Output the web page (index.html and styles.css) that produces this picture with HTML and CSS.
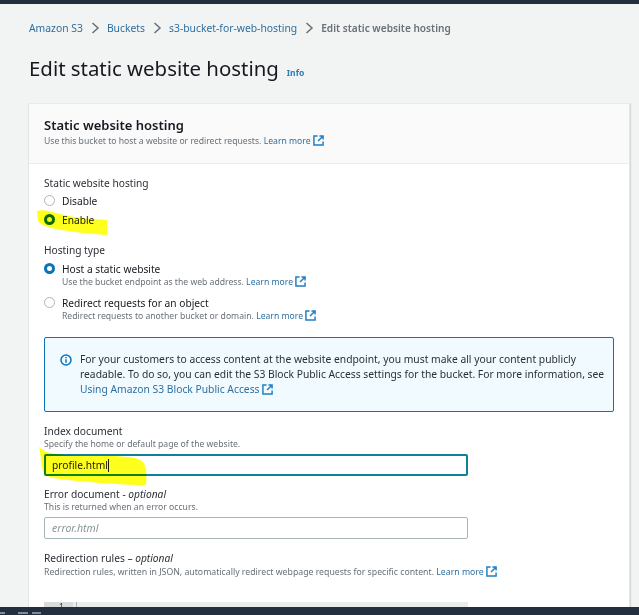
FILE: index.html
```html
<!DOCTYPE html>
<html lang="en">
<head>
<meta charset="utf-8">
<title>Edit static website hosting</title>
<link rel="stylesheet" href="styles.css">
</head>
<body>
<svg width="0" height="0" class="defs">
  <symbol id="ext" viewBox="0 0 12 12">
    <path d="M5 1H1v10h10V7M7 1h4v4M11 1 5.500 6.500" fill="none" stroke="currentColor" stroke-width="1.600"/>
  </symbol>
  <symbol id="chev" viewBox="0 0 9 12">
    <path d="M1.500 1 7 6l-5.500 5" fill="none" stroke="currentColor" stroke-width="1.500"/>
  </symbol>
</svg>
<div class="topbar"></div>
<main class="page">
  <nav class="crumbs">
    <a>Amazon S3</a><svg class="chev"><use href="#chev"/></svg>
    <a>Buckets</a><svg class="chev"><use href="#chev"/></svg>
    <a>s3-bucket-for-web-hosting</a><svg class="chev"><use href="#chev"/></svg>
    <span class="current">Edit static website hosting</span>
  </nav>
  <header class="title-row">
    <h1>Edit static website hosting</h1>
    <a class="info">Info</a>
  </header>
  <section class="card">
    <div class="card-head">
      <h2>Static website hosting</h2>
      <p class="desc">Use this bucket to host a website or redirect requests. <a>Learn more</a> <svg class="ext"><use href="#ext"/></svg></p>
    </div>
    <div class="card-body">
      <div class="group g-static">
        <div class="label">Static website hosting</div>
        <div class="radio"><span class="dot"></span><span>Disable</span></div>
        <div class="radio"><span class="dot on-green"></span><span>Enable</span></div>
      </div>
      <div class="group g-type">
        <div class="label">Hosting type</div>
        <div class="radio rich"><span class="dot on"></span><div><div>Host a static website</div><p class="desc">Use the bucket endpoint as the web address. <a>Learn more</a> <svg class="ext"><use href="#ext"/></svg></p></div></div>
        <div class="radio rich"><span class="dot"></span><div><div>Redirect requests for an object</div><p class="desc">Redirect requests to another bucket or domain. <a>Learn more</a> <svg class="ext"><use href="#ext"/></svg></p></div></div>
      </div>
      <div class="alert">
        <svg class="alert-icon" viewBox="0 0 12 12"><circle cx="6" cy="6" r="5" fill="none" stroke="currentColor" stroke-width="1.500"/><path d="M6 5.200v3.600M6 3v1.300" stroke="currentColor" stroke-width="1.500"/></svg>
        <p>For your customers to access content at the website endpoint, you must make all your content publicly readable. To do so, you can edit the S3 Block Public Access settings for the bucket. For more information, see <a>Using Amazon S3 Block Public Access</a> <svg class="ext"><use href="#ext"/></svg></p>
      </div>
      <div class="field f-index">
        <div class="label">Index document</div>
        <p class="desc">Specify the home or default page of the website.</p>
        <div class="input focus">profile.html<span class="caret"></span></div>
      </div>
      <div class="field f-error">
        <div class="label">Error document - <i>optional</i></div>
        <p class="desc">This is returned when an error occurs.</p>
        <div class="input placeholder">error.html</div>
      </div>
      <div class="field f-rules">
        <div class="label">Redirection rules – <i>optional</i></div>
        <p class="desc wide">Redirection rules, written in JSON, automatically redirect webpage requests for specific content. <a>Learn more</a> <svg class="ext"><use href="#ext"/></svg></p>
        <div class="editor"><span class="gutter">1</span><span class="gutter-line"></span></div>
      </div>
    </div>
  </section>
</main>
<svg class="highlights" width="639" height="615" viewBox="0 0 639 615">
  <path d="M37 211C44 209 50 212 60 214C75 218 92 219 107 220L107 235C90 234 75 232 62 230C50 228 42 226 38 221Z" fill="#ffff1e"/>
  <path d="M39 447L46 452C62 456 80 456 100 456C118 456 135 456 142 461C147 466 147 475 146 485C125 485 100 483 78 481C65 480 50 478 44 475C41 465 41 455 39 447Z" fill="#ffff1e"/>
</svg>
<footer class="bottombar"><i></i><i class="m2"></i><i class="m3"></i></footer>
</body>
</html>
```
FILE: styles.css
```css
* { box-sizing: border-box; }
html, body { margin: 0; height: 615px; overflow: hidden; }
body {
  background: #f2f3f3;
  color: #16191f;
  font-family: "Noto Sans", "Open Sans", sans-serif;
  font-size: 10.200px;
  position: relative;
}
.defs { position: absolute; }
a { color: #2f6f9f; }
.topbar { height: 4px; background: #232f3e; }
.page { padding: 0 9px 0 28px; }
.crumbs { display: flex; align-items: center; height: 15px; margin-top: 16px; margin-left: 1px; font-size: 10.350px; white-space: nowrap; }
.chev { width: 9px; height: 12px; margin: 0 7px 0 8px; color: #687078; }
.current { color: #687078; font-weight: 600; font-size: 10.100px; }
.title-row { display: flex; align-items: baseline; gap: 8px; margin-top: 18px; margin-left: 1px; height: 30px; }
h1 { margin: 0; font-size: 20.400px; font-weight: 400; line-height: 30px; }
.info { font-size: 8.500px; font-weight: 700; color: #2f7cb5; }
.card { margin-top: 20px; background: #fff; border: 1px solid #e4e6e6; border-top-color: #e9ebeb; box-shadow: 1px 1px 1px #d5dbdb; height: 512px; overflow: hidden; }
.card-head { height: 60px; padding: 13px 15px 0; background: #fafafa; border-bottom: 1px solid #eaeded; }
h2 { margin: 0 0 2px; font-size: 13px; font-weight: 600; line-height: 16px; }
.desc { margin: 0; font-size: 8.650px; color: #687078; line-height: 12px; white-space: nowrap; }
.desc.wide { font-size: 8.730px; margin-top: 1px; }
.ext { width: 11px; height: 11px; color: #1f7fc4; vertical-align: -2px; }
.card-body { padding: 0 15px; }
.label { line-height: 14px; color: #2b2f36; white-space: nowrap; }
.g-static { padding-top: 12px; }
.g-static .label { margin-bottom: 1px; }
.g-static .radio { height: 19px; }
.radio { display: flex; align-items: center; gap: 7px; }
.dot { flex: none; width: 11px; height: 11px; border-radius: 50%; border: 1px solid #aab7b8; background: #fff; }
.dot.on { border: 3.500px solid #0a73bb; }
.dot.on-green { border: 3.500px solid #0b6a0b; background: #f4f49a; }
.g-type { padding-top: 14px; }
.g-type .label { margin-bottom: 5px; }
.rich { align-items: flex-start; height: 34px; line-height: 14px; }
.rich .dot { margin-top: 1px; }
.alert { display: flex; gap: 8px; margin-top: 7px; width: 570px; height: 75px; padding: 14px 3px 0 15px; background: #f1faff; border: 1px solid #0a73bb; border-radius: 2px; }
.alert p { margin: 0; font-size: 10.300px; line-height: 15px; color: #2b2f36; }
.alert-icon { flex: none; width: 12px; height: 12px; margin-top: 2px; color: #0a73bb; }
.field { width: 570px; }
.f-index { margin-top: 12px; }
.f-error { margin-top: 11px; }
.f-rules { margin-top: 12px; }
.input { width: 424px; height: 22px; margin-top: 4px; padding: 0 7px; border: 1px solid #aab7b8; border-radius: 2px; background: #fff; line-height: 20px; }
.input.focus { border: 2px solid #0f8299; padding: 0 6px; line-height: 18px; }
.placeholder { color: #879596; font-style: italic; font-size: 10.500px; }
.caret { display: inline-block; width: 1px; height: 13px; background: #16191f; vertical-align: -3px; }
.editor { display: flex; width: 424px; height: 14px; margin-top: 24px; background: #eaeded; font-size: 8.500px; line-height: 10px; }
.gutter { width: 29px; height: 14px; padding-left: 15px; background: #d9dcdc; color: #444; }
.gutter-line { width: 1px; height: 14px; margin-left: 3px; background: #aab7b8; }
.highlights { position: absolute; left: 0; top: 0; mix-blend-mode: multiply; pointer-events: none; z-index: 3; }
.bottombar { position: absolute; left: 0; right: 0; top: 607px; height: 8px; background: #232f3e; z-index: 4; display: flex; gap: 12px; align-items: flex-end; padding-bottom: 1px; }
.bottombar i { width: 5px; height: 2px; background: #7d8a99; }
.bottombar .m2 { width: 10px; margin-left: 1px; }
.bottombar .m3 { width: 9px; margin-left: -8px; }
```
